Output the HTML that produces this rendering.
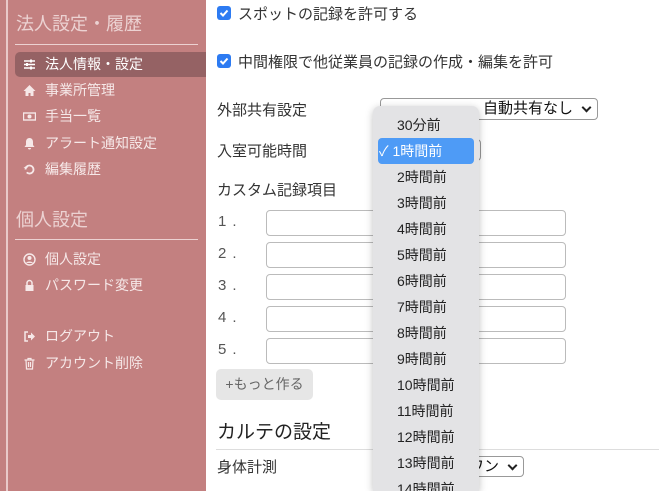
<!DOCTYPE html>
<html style="width:659px;height:491px;overflow:hidden"><head><meta charset="utf-8"><style>
*{box-sizing:border-box;margin:0;padding:0}
body{width:659px;height:491px;overflow:hidden;background:#fff;font-family:"Liberation Sans","Noto Sans CJK JP",sans-serif;position:relative;color:#333}
.sb{position:absolute;left:0;top:0;width:206px;height:491px;background:#c38080}
.vl{position:absolute;left:6px;top:0;width:2px;height:491px;background:#e9c9c9}
.h{position:absolute;left:16px;color:#ecd2d2;font-size:18px}
.hr{position:absolute;left:15px;width:183px;height:1px;background:#ecd2d2}
.it{position:absolute;left:15px;width:191px;height:25px;color:#f6e8e8;font-size:14px;line-height:25px;padding-left:30px}
.it .ic{position:absolute;left:8px;top:6px;width:13px;height:13px}
.act{background:#956264;border-radius:5px 0 0 5px;color:#fff}
.t{position:absolute;font-size:15px;color:#333;white-space:nowrap}
.cb{position:absolute;width:14px;height:14px;background:#2d7bf2;border-radius:3px}
.sel{position:absolute;border:1px solid #999;border-radius:4px;background:#fff;font-size:15px;color:#111;line-height:20px;text-align:right;padding-right:24px}
.sel:after{content:"";position:absolute;right:7px;top:5px;width:5px;height:5px;border-right:2px solid #222;border-bottom:2px solid #222;transform:rotate(45deg)}
.in{position:absolute;left:266px;width:300px;height:26px;border:1px solid #bbb;border-radius:4px}
.n{position:absolute;left:218px;font-size:15px;color:#555;letter-spacing:6px}
.dd{position:absolute;left:373px;top:106px;width:106px;height:385px;background:#e3e3e5;border-radius:7px 7px 0 0;box-shadow:0 2px 8px rgba(0,0,0,.25);overflow:hidden}
.o{position:absolute;left:24px;font-size:14px;color:#222;white-space:nowrap}
.hl{position:absolute;left:5px;top:32px;width:96px;height:26px;background:#4e9bf6;border-radius:4px}
</style></head><body>
<div class="sb"></div><div class="vl"></div>
<div class="h" style="top:10px">法人設定・履歴</div>
<div class="hr" style="top:44px"></div>
<div class="it act" style="top:52px"><svg class="ic" viewBox="0 0 13 13"><path d="M1 3h11M1 6.5h11M1 10h11" stroke="#fff" stroke-width="1.4"/><rect x="7" y="1.5" width="2" height="3" fill="#fff"/><rect x="3" y="5" width="2" height="3" fill="#fff"/><rect x="7" y="8.5" width="2" height="3" fill="#fff"/></svg>法人情報・設定</div>
<div class="it" style="top:78px"><svg class="ic" viewBox="0 0 13 13"><path d="M6.5 1L0.5 7h2v5h3V9h2v3h3V7h2z" fill="#f6e8e8"/></svg>事業所管理</div>
<div class="it" style="top:104px"><svg class="ic" viewBox="0 0 13 13"><rect x="0.5" y="3" width="12" height="7" fill="none" stroke="#f6e8e8" stroke-width="1.4"/><circle cx="6.5" cy="6.5" r="2" fill="#f6e8e8"/></svg>手当一覧</div>
<div class="it" style="top:131px"><svg class="ic" viewBox="0 0 13 13"><path d="M6.5 1C4 1 3 3 3 5v3L1.5 10h10L10 8V5c0-2-1-4-3.5-4zM5 11h3a1.5 1.5 0 01-3 0z" fill="#f6e8e8"/></svg>アラート通知設定</div>
<div class="it" style="top:157px"><svg class="ic" viewBox="0 0 13 13"><path d="M2.5 6.5a4 4 0 1 1 1.2 2.9" fill="none" stroke="#f6e8e8" stroke-width="1.8"/><path d="M0.5 5h4v-3z" fill="#f6e8e8"/></svg>編集履歴</div>
<div class="h" style="top:206px">個人設定</div>
<div class="hr" style="top:239px"></div>
<div class="it" style="top:247px"><svg class="ic" viewBox="0 0 13 13"><circle cx="6.5" cy="6.5" r="5.5" fill="none" stroke="#f6e8e8" stroke-width="1.4"/><circle cx="6.5" cy="5" r="2" fill="#f6e8e8"/><path d="M3 10c1-2 6-2 7 0" fill="#f6e8e8"/></svg>個人設定</div>
<div class="it" style="top:273px"><svg class="ic" viewBox="0 0 13 13"><path d="M4 6V4a2.5 2.5 0 015 0v2" fill="none" stroke="#f6e8e8" stroke-width="1.5"/><rect x="2.5" y="6" width="8" height="6" fill="#f6e8e8"/></svg>パスワード変更</div>
<div class="it" style="top:324px"><svg class="ic" viewBox="0 0 13 13"><path d="M5 2H2v9h3" fill="none" stroke="#f6e8e8" stroke-width="1.5"/><path d="M5 5h3V2.5l4 4-4 4V8H5z" fill="#f6e8e8"/></svg>ログアウト</div>
<div class="it" style="top:351px"><svg class="ic" viewBox="0 0 13 13"><path d="M1.5 3h10M5 3V1.5h3V3M3 3l.5 9h6l.5-9M5.5 5v5M7.5 5v5" fill="none" stroke="#f6e8e8" stroke-width="1.2"/></svg>アカウント削除</div>

<div class="cb" style="left:217px;top:6px"><svg width="14" height="14"><path d="M3.5 7l2.5 2.5 4.5-5" fill="none" stroke="#fff" stroke-width="2"/></svg></div>
<div class="t" style="left:238px;top:3px">スポットの記録を許可する</div>
<div class="cb" style="left:217px;top:54px"><svg width="14" height="14"><path d="M3.5 7l2.5 2.5 4.5-5" fill="none" stroke="#fff" stroke-width="2"/></svg></div>
<div class="t" style="left:238px;top:51px">中間権限で他従業員の記録の作成・編集を許可</div>
<div class="t" style="left:217px;top:99px">外部共有設定</div>
<div class="sel" style="left:380px;top:98px;width:218px;height:22px">自動共有なし</div>
<div class="t" style="left:217px;top:140px">入室可能時間</div>
<div class="sel" style="left:380px;top:139px;width:101px;height:22px"></div>
<div class="t" style="left:217px;top:179px">カスタム記録項目</div>
<div class="n" style="top:213px">1.</div><div class="in" style="top:210px"></div>
<div class="n" style="top:245px">2.</div><div class="in" style="top:242px"></div>
<div class="n" style="top:277px">3.</div><div class="in" style="top:274px"></div>
<div class="n" style="top:309px">4.</div><div class="in" style="top:306px"></div>
<div class="n" style="top:341px">5.</div><div class="in" style="top:338px"></div>
<div style="position:absolute;left:216px;top:369px;width:97px;height:31px;background:#e6e6e6;border-radius:5px;color:#666;font-size:14px;line-height:31px;text-align:center">+もっと作る</div>
<div class="t" style="left:217px;top:417px;font-size:19px;color:#222">カルテの設定</div>
<div style="position:absolute;left:216px;top:449px;width:443px;height:1px;background:#ddd"></div>
<div class="t" style="left:217px;top:456px">身体計測</div>
<div class="sel" style="left:440px;top:456px;width:84px;height:21px">ワン</div>

<div class="dd">
<div class="hl"></div>
<div class="o" style="top:9px">30分前</div>
<div class="o" style="top:35px;color:#fff;left:6px">✓ 1時間前</div>
<div class="o" style="top:61px">2時間前</div>
<div class="o" style="top:87px">3時間前</div>
<div class="o" style="top:113px">4時間前</div>
<div class="o" style="top:139px">5時間前</div>
<div class="o" style="top:165px">6時間前</div>
<div class="o" style="top:191px">7時間前</div>
<div class="o" style="top:217px">8時間前</div>
<div class="o" style="top:243px">9時間前</div>
<div class="o" style="top:269px">10時間前</div>
<div class="o" style="top:295px">11時間前</div>
<div class="o" style="top:321px">12時間前</div>
<div class="o" style="top:347px">13時間前</div>
<div class="o" style="top:373px">14時間前</div>
</div>
</body></html>
